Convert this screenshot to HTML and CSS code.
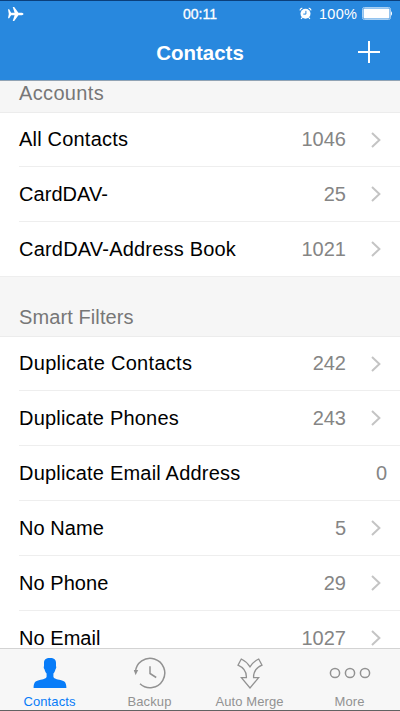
FILE: index.html
```html
<!DOCTYPE html>
<html lang="en">
<head>
<meta charset="utf-8">
<title>Contacts</title>
<link rel="stylesheet" href="styles.css">
</head>
<body>
<div class="phone">
  <header class="header">
    <div class="status">
      <svg class="plane" width="16" height="14" viewBox="0 0 16 14"><path fill="#fff" d="M0 2.200h1.200l1.900 3.500 3.500.1L4.700 0h1.500l4.200 5.800h3.500q1.600.3 1.600 1.200t-1.600 1.200h-3.500L6.200 14H4.700l1.900-5.800-3.500.1-1.900 2.900H0l.8-4.200z"/></svg>
      <span class="time">00:11</span>
      <div class="status-right">
        <svg class="alarm" width="13" height="13" viewBox="0 0 13 13"><circle cx="6.5" cy="6.8" r="5" fill="#fff"/><path d="M.9 3.300Q1.400 1.600 3.300 1M12.100 3.300Q11.600 1.600 9.700 1M3.200 10.500l-1.100 1.400M9.800 10.500l1.100 1.400" fill="none" stroke="#fff" stroke-width="1.200"/><path d="M6.900 3.800v3.300H4.300" fill="none" stroke="#2888de" stroke-width="1"/></svg>
        <span class="percent">100%</span>
        <svg class="battery" width="30" height="13" viewBox="0 0 30 13"><rect x=".5" y=".5" width="28" height="12" rx="1.8" fill="none" stroke="#a9d0f3"/><rect x="1.5" y="1.5" width="26" height="10" rx="1" fill="#fff"/><path d="M29 4.200q1 .6 1 2.300t-1 2.300z" fill="#fff"/></svg>
      </div>
    </div>
    <div class="nav">
      <h1 class="title">Contacts</h1>
      <svg class="plus" width="22" height="22" viewBox="0 0 22 22"><path d="M11 0v22M0 11h22" stroke="#fff" stroke-width="2"/></svg>
    </div>
  </header>
  <main class="content">
    <h2 class="section section-first">Accounts</h2>
    <ul class="list">
      <li class="row"><span class="name">All Contacts</span><span class="count">1046</span><svg class="chevron" viewBox="0 0 10 16"><path d="M1 1l7.400 7L1 15"/></svg></li>
      <li class="row"><span class="name tight">CardDAV-</span><span class="count">25</span><svg class="chevron" viewBox="0 0 10 16"><path d="M1 1l7.400 7L1 15"/></svg></li>
      <li class="row row-end"><span class="name">CardDAV-Address Book</span><span class="count">1021</span><svg class="chevron" viewBox="0 0 10 16"><path d="M1 1l7.400 7L1 15"/></svg></li>
    </ul>
    <h2 class="section">Smart Filters</h2>
    <ul class="list">
      <li class="row"><span class="name wide">Duplicate Contacts</span><span class="count">242</span><svg class="chevron" viewBox="0 0 10 16"><path d="M1 1l7.400 7L1 15"/></svg></li>
      <li class="row"><span class="name">Duplicate Phones</span><span class="count">243</span><svg class="chevron" viewBox="0 0 10 16"><path d="M1 1l7.400 7L1 15"/></svg></li>
      <li class="row row-plain"><span class="name">Duplicate Email Address</span><span class="count">0</span></li>
      <li class="row"><span class="name tight">No Name</span><span class="count">5</span><svg class="chevron" viewBox="0 0 10 16"><path d="M1 1l7.400 7L1 15"/></svg></li>
      <li class="row"><span class="name tight">No Phone</span><span class="count">29</span><svg class="chevron" viewBox="0 0 10 16"><path d="M1 1l7.400 7L1 15"/></svg></li>
      <li class="row"><span class="name tight">No Email</span><span class="count">1027</span><svg class="chevron" viewBox="0 0 10 16"><path d="M1 1l7.400 7L1 15"/></svg></li>
    </ul>
  </main>
  <nav class="tabs">
    <a class="tab active">
      <svg width="34" height="34" viewBox="0 0 34 34"><path fill="#087cf8" d="M17 2c4.300 0 6 1.800 6 4.700v3.600c.5.400.3 2.400-.5 2.900-.4 1.900-1.200 3.300-2.100 4.200v3.400c.5 1.900 3.500 2.500 7 3.200 4.500.9 6 2.700 6 8H.6c0-5.300 1.500-7.100 6-8 3.500-.7 6.500-1.300 7-3.200v-3.400c-.9-.9-1.700-2.300-2.100-4.200-.8-.5-1-2.500-.5-2.900V6.700C11 3.800 12.700 2 17 2z"/></svg>
      <span class="tab-label">Contacts</span>
    </a>
    <a class="tab">
      <svg width="34" height="34" viewBox="0 0 34 34"><g fill="none" stroke="#929292" stroke-width="1.500"><path d="M2.400 16A14.700 14.700 0 1 1 7 27.700"/><path d="M17 10.200v7.300l6.200 4"/></g><path d="M.8 14h4.400l-2.600 5.200z" fill="#929292"/></svg>
      <span class="tab-label">Backup</span>
    </a>
    <a class="tab">
      <svg width="34" height="34" viewBox="0 0 34 34"><path fill="none" stroke="#929292" stroke-width="1.300" d="M8.300 3Q13.500 5.500 17 10.800 20.500 5.500 25.700 3L29 9.200Q20.200 13 20.600 21.700h5L17 32 8.400 21.700h5Q13.800 13 5 9.200z"/></svg>
      <span class="tab-label">Auto Merge</span>
    </a>
    <a class="tab">
      <svg width="42" height="34" viewBox="0 0 42 34"><g fill="none" stroke="#929292" stroke-width="1.500"><circle cx="6" cy="17" r="4.600"/><circle cx="21" cy="17" r="4.600"/><circle cx="36" cy="17" r="4.600"/></g></svg>
      <span class="tab-label">More</span>
    </a>
  </nav>
</div>
</body>
</html>
```
FILE: styles.css
```css
* { box-sizing: border-box; }

body {
  margin: 0;
  font-family: "Liberation Sans", Arial, sans-serif;
  background: #fff;
}

.phone {
  display: flex;
  flex-direction: column;
  width: 400px;
  height: 711px;
  overflow: hidden;
}

.header {
  flex: none;
  height: 81px;
  background: #2888de;
  border-top: 1px solid #0b3f7b;
  border-bottom: 1px solid #91a3b4;
  color: #fff;
}

.status {
  display: grid;
  grid-template-columns: 1fr auto 1fr;
  align-items: center;
  height: 25px;
  padding: 0 8px;
}

.time {
  font-size: 14px;
  -webkit-text-stroke: 0.3px #fff;
}

.status-right {
  display: flex;
  justify-content: flex-end;
  align-items: center;
}

.percent {
  margin: 0 5px 0 7px;
  font-size: 14.500px;
  letter-spacing: 0.2px;
}

.nav {
  display: grid;
  grid-template-columns: 1fr auto 1fr;
  align-items: center;
  height: 54px;
  padding: 0 20px;
}

.title {
  grid-column: 2;
  margin: 0;
  font-size: 20.500px;
  line-height: 54px;
}

.plus {
  justify-self: end;
  margin-bottom: 3px;
}

.content {
  flex: 1;
  min-height: 0;
  overflow: hidden;
}

.section {
  height: 60px;
  margin: 0;
  padding: 28px 19px 0;
  background: #f6f6f6;
  border-bottom: 1px solid #ececec;
  color: #777;
  font-size: 20px;
  font-weight: 400;
  line-height: 24px;
  letter-spacing: 0.1px;
}

.section-first {
  height: 32px;
  padding-top: 0;
  letter-spacing: 0.35px;
}

.list {
  margin: 0;
  padding: 0;
  list-style: none;
}

.row {
  display: flex;
  align-items: center;
  height: 55px;
  margin-left: 19px;
  padding-right: 19px;
  border-bottom: 1px solid #eee;
  font-size: 20px;
}

.row:first-child { height: 54px; }

.row-end {
  margin-left: 0;
  padding-left: 19px;
}

.row-plain { padding-right: 13px; }

.name {
  flex: 1;
  color: #000;
  letter-spacing: 0.2px;
}

.name.tight { letter-spacing: 0.05px; }

.name.wide { letter-spacing: 0.3px; }

.count { color: #858585; }

.chevron {
  width: 10px;
  height: 16px;
  margin-left: 25px;
  fill: none;
  stroke: #c4c4c4;
  stroke-width: 2;
}

.tabs {
  display: grid;
  grid-template-columns: repeat(4, 100px);
  flex: none;
  height: 63px;
  background: #f7f7f7;
  border-top: 1px solid #d3d3d3;
  border-bottom: 1px solid #626262;
}

.tab {
  display: flex;
  flex-direction: column;
  align-items: center;
  padding-top: 7px;
  color: #929292;
  font-size: 13px;
}

.active { color: #087cf8; }

.tab svg { display: block; }

.tab:first-child svg { margin-right: 1px; }

.tab-label {
  margin-top: 4px;
  margin-right: 1px;
  line-height: 16px;
  letter-spacing: 0.1px;
}
```
